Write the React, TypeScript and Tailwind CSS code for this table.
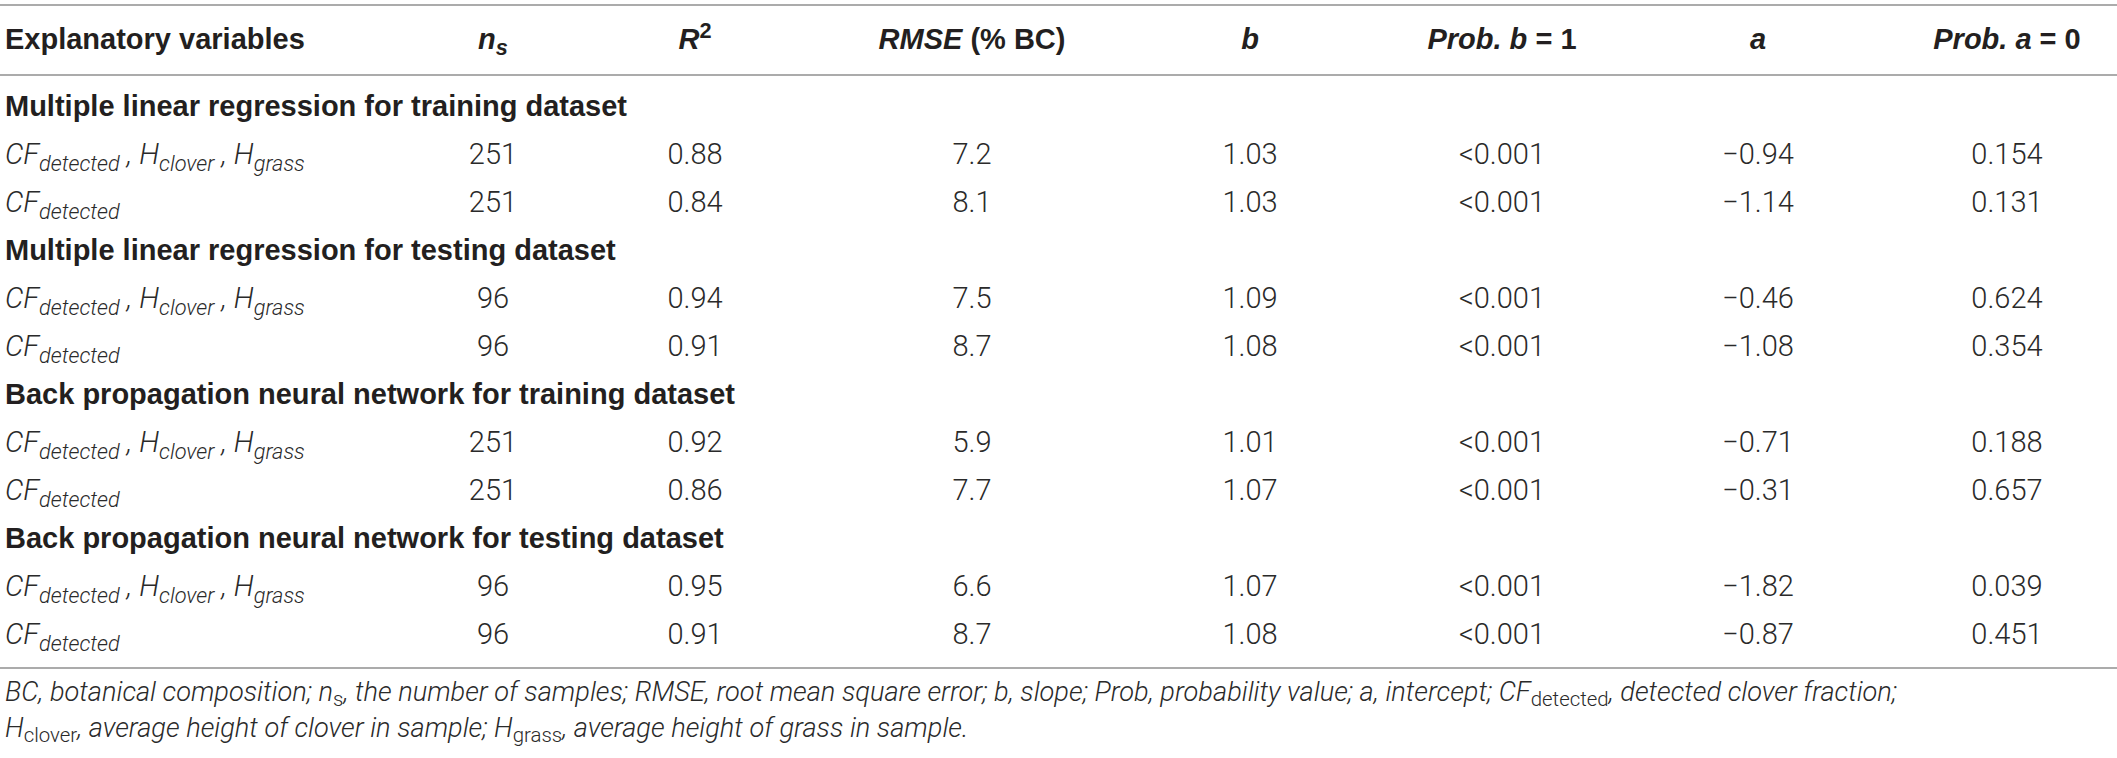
import React from "react";

type Row = {
  full: boolean;
  ns: string;
  r2: string;
  rmse: string;
  b: string;
  pb: string;
  a: string;
  pa: string;
};

const sections: { title: string; rows: Row[] }[] = [
  {
    title: "Multiple linear regression for training dataset",
    rows: [
      { full: true, ns: "251", r2: "0.88", rmse: "7.2", b: "1.03", pb: "<0.001", a: "−0.94", pa: "0.154" },
      { full: false, ns: "251", r2: "0.84", rmse: "8.1", b: "1.03", pb: "<0.001", a: "−1.14", pa: "0.131" },
    ],
  },
  {
    title: "Multiple linear regression for testing dataset",
    rows: [
      { full: true, ns: "96", r2: "0.94", rmse: "7.5", b: "1.09", pb: "<0.001", a: "−0.46", pa: "0.624" },
      { full: false, ns: "96", r2: "0.91", rmse: "8.7", b: "1.08", pb: "<0.001", a: "−1.08", pa: "0.354" },
    ],
  },
  {
    title: "Back propagation neural network for training dataset",
    rows: [
      { full: true, ns: "251", r2: "0.92", rmse: "5.9", b: "1.01", pb: "<0.001", a: "−0.71", pa: "0.188" },
      { full: false, ns: "251", r2: "0.86", rmse: "7.7", b: "1.07", pb: "<0.001", a: "−0.31", pa: "0.657" },
    ],
  },
  {
    title: "Back propagation neural network for testing dataset",
    rows: [
      { full: true, ns: "96", r2: "0.95", rmse: "6.6", b: "1.07", pb: "<0.001", a: "−1.82", pa: "0.039" },
      { full: false, ns: "96", r2: "0.91", rmse: "8.7", b: "1.08", pb: "<0.001", a: "−0.87", pa: "0.451" },
    ],
  },
];

const cols = "grid grid-cols-[400px_186px_218px_336px_220px_284px_228px_1fr]";

const Vars = ({ full }: { full: boolean }) => (
  <span className="italic">
    CF<sub className="-bottom-[0.3em]">detected</sub>
    {full && (
      <>
        {" , "}H<sub className="-bottom-[0.3em]">clover</sub>
        {" , "}H<sub className="-bottom-[0.3em]">grass</sub>
      </>
    )}
  </span>
);

export default function App() {
  return (
    <div className="w-full bg-white pt-[4px] text-[#231f20] font-['Liberation_Sans',Arial,sans-serif]">
      <div className="border-t-2 border-[#ababab]">
        {/* header */}
        <div className={`${cols} h-[70px] items-center font-bold text-[29px] border-b-2 border-[#ababab]`}>
          <div className="pl-[5px]">Explanatory variables</div>
          <div className="text-center italic">
            n<sub>s</sub>
          </div>
          <div className="text-center">
            <i>R</i>
            <sup>2</sup>
          </div>
          <div className="text-center">
            <i>RMSE</i> (% BC)
          </div>
          <div className="text-center italic">b</div>
          <div className="text-center">
            <i>Prob. b</i> = 1
          </div>
          <div className="text-center italic">a</div>
          <div className="text-center pl-[25px]">
            <i>Prob. a</i> = 0
          </div>
        </div>

        {/* body */}
        <div className="pt-[7px] pb-[8px] border-b-2 border-[#ababab]">
          {sections.map((s) => (
            <div key={s.title}>
              <div className="h-[48px] flex items-center pl-[5px] font-bold text-[29px]">{s.title}</div>
              {s.rows.map((r, i) => (
                <div
                  key={i}
                  className={`${cols} h-[48px] items-center text-[29px] font-light text-[#2a2a2a] font-['Roboto','Liberation_Sans',sans-serif]`}
                >
                  <div className="pl-[5px] whitespace-nowrap">
                    <Vars full={r.full} />
                  </div>
                  <div className="text-center">{r.ns}</div>
                  <div className="text-center">{r.r2}</div>
                  <div className="text-center">{r.rmse}</div>
                  <div className="text-center">{r.b}</div>
                  <div className="text-center">{r.pb}</div>
                  <div className="text-center">{r.a}</div>
                  <div className="text-center pl-[25px]">{r.pa}</div>
                </div>
              ))}
            </div>
          ))}
        </div>
      </div>

      {/* footnote */}
      <div className="pt-[5px] pl-[5px] text-[27.2px] leading-[36px] italic font-light text-[#2a2a2a] font-['Roboto','Liberation_Sans',sans-serif]">
        <div className="whitespace-nowrap">
          BC, botanical composition; n<sub className="not-italic">s</sub>, the number of samples; RMSE, root mean square error; b, slope; Prob,
          probability value; a, intercept; CF<sub className="not-italic">detected</sub>, detected clover fraction;
        </div>
        <div className="whitespace-nowrap">
          H<sub className="not-italic">clover</sub>, average height of clover in sample; H<sub className="not-italic">grass</sub>, average
          height of grass in sample.
        </div>
      </div>
    </div>
  );
}
